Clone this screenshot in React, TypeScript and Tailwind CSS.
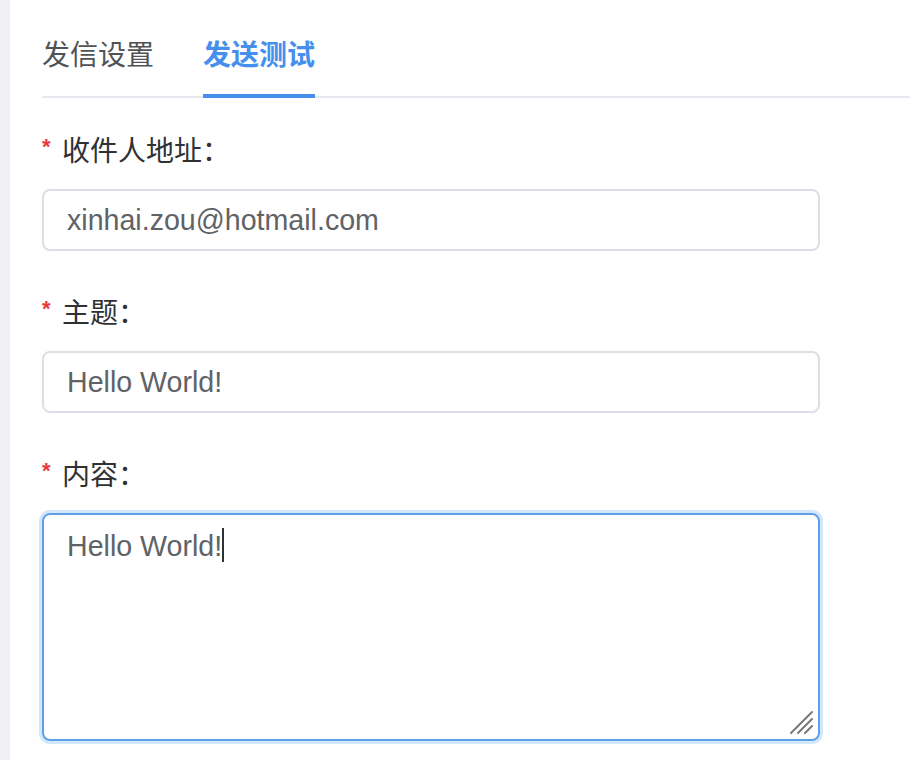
import React from "react";

const font = { fontFamily: '"Liberation Sans", "Noto Sans CJK SC", sans-serif' };

function Label({ text }: { text: string }) {
  return (
    <div className="flex items-center h-[40px] text-[28px] text-[#303133]">
      <span className="text-[#e8383d] text-[22px] w-[20px] leading-none relative top-[-5px] font-bold">*</span>
      <span>{text}</span>
    </div>
  );
}

export default function App() {
  return (
    <div className="flex w-[910px] h-[760px] bg-white overflow-hidden" style={font}>
      <div className="w-[10px] h-full bg-[#f0f1f5] shrink-0" />
      <div className="flex-1 pl-[32px] pt-[16px]">
        <div className="flex border-b-2 border-[#e4e7ed] h-[82px]">
          <div className="relative h-[80px] leading-[80px] text-[28px] text-[#505256]">发信设置</div>
          <div className="relative ml-[49px] h-[80px] leading-[80px] text-[28px] text-[#4590ec] font-bold">
            发送测试
            <div className="absolute left-0 right-0 bottom-[-2px] h-[4px] bg-[#4590ec]" />
          </div>
        </div>

        <div className="mt-[34px] w-[778px]">
          <Label text="收件人地址：" />
          <div className="mt-[17px] h-[62px] border-2 border-[#dcdfe6] rounded-[8px] flex items-center pl-[23px] text-[28.6px] text-[#606266]">
            xinhai.zou@hotmail.com
          </div>

          <div className="mt-[43px]">
            <Label text="主题：" />
          </div>
          <div className="mt-[17px] h-[62px] border-2 border-[#dcdfe6] rounded-[8px] flex items-center pl-[23px] text-[28.6px] text-[#606266]">
            Hello World!
          </div>

          <div className="mt-[43px]">
            <Label text="内容：" />
          </div>
          <div className="relative mt-[17px] h-[228px] border-2 border-[#5f9fe6] rounded-[8px] shadow-[0_0_0_3px_#d3e7fc] pl-[23px] pt-[10px] text-[28.6px] leading-[42px] text-[#606266]">
            <span>Hello World!</span>
            <span className="inline-block w-[2px] h-[34px] bg-[#303133] align-middle relative top-[-3px]" />
            <svg className="absolute right-[2px] bottom-[2px]" width="28" height="28" viewBox="0 0 28 28">
              <g stroke="#777" strokeWidth="2" strokeLinecap="round">
                <line x1="3" y1="24" x2="24" y2="3" />
                <line x1="10" y1="24" x2="24" y2="10" />
                <line x1="17" y1="24" x2="24" y2="17" />
              </g>
            </svg>
          </div>
        </div>
      </div>
    </div>
  );
}
